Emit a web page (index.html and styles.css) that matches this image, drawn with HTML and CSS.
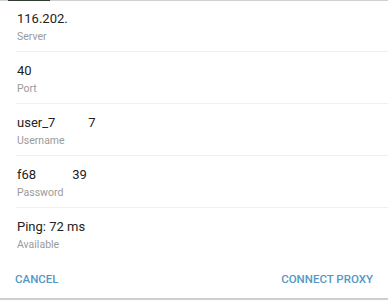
FILE: index.html
```html
<!DOCTYPE html>
<html>
<head>
    <title>Proxy Settings</title>
    <link rel="stylesheet" href="styles.css">
</head>
<body>
    <div class="top-edge"><div class="top-mark"></div></div>
    <div class="proxy-info">
        <div class="info-row">
            <div class="value">116.202.</div>
            <div class="label">Server</div>
        </div>
        <div class="info-row">
            <div class="value">40</div>
            <div class="label">Port</div>
        </div>
        <div class="info-row">
            <div class="value">user_7<span class="hidden-part user-gap"></span>7</div>
            <div class="label">Username</div>
        </div>
        <div class="info-row">
            <div class="value">f68<span class="hidden-part pass-gap"></span>39</div>
            <div class="label">Password</div>
        </div>
        <div class="info-row last">
            <div class="value">Ping: 72 ms</div>
            <div class="label">Available</div>
        </div>
    </div>
    <div class="actions">
        <button type="button">CANCEL</button>
        <button type="button">CONNECT PROXY</button>
    </div>
    <div class="bottom-edge"></div>
</body>
</html>
```

FILE: styles.css
```css
body {
    margin: 0;
    background: white;
    font-family: Roboto, "Liberation Sans", sans-serif;
    width: 388px;
    height: 300px;
    overflow: hidden;
}

.top-edge {
    height: 1px;
    background: #cfcfcf;
    display: flex;
}

.top-mark {
    margin-left: 8px;
    width: 42px;
    background: #2f3d30;
}

.proxy-info {
    margin-top: -1px;
}

.info-row {
    height: 52px;
    box-sizing: border-box;
    margin-left: 16px;
    padding: 11px 0 0 1px;
    border-bottom: 1px solid #efefef;
}

.info-row.last {
    border-bottom: none;
}

.value {
    font-size: 13px;
    line-height: 16px;
    color: #222;
    white-space: nowrap;
}

.hidden-part {
    display: inline-block;
}

.user-gap {
    width: 33px;
}

.pass-gap {
    width: 36px;
}

.label {
    margin-top: 3px;
    font-size: 10.5px;
    line-height: 14px;
    color: #9a9a9a;
}

.actions {
    height: 38px;
    display: flex;
    justify-content: space-between;
    align-items: center;
    padding: 0 15px;
}

button {
    background: none;
    border: none;
    padding: 0;
    font-family: Roboto, "Liberation Sans", sans-serif;
    font-size: 11.5px;
    font-weight: 500;
    color: #5398c6;
    cursor: pointer;
}

.bottom-edge {
    height: 2px;
    background: #cfcfcf;
}
```
